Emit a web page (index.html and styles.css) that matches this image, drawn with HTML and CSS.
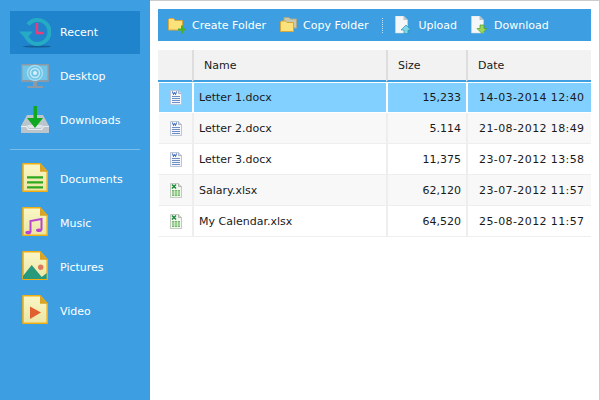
FILE: index.html
```html
<!DOCTYPE html>
<html>
<head>
<meta charset="utf-8">
<title>Files</title>
<link rel="stylesheet" href="styles.css">
</head>
<body>
	<svg class="defs" width="0" height="0">
		<symbol id="word" viewBox="0 0 12 15">
			<path d="M.5.5h8l3 3v11h-11z" fill="#f4f6fa" stroke="#bcc6d6"/>
			<path d="M8.500.5v3h3" fill="#d5dbe5" stroke="#aab4c4"/>
			<path d="M2.500 1.500l1 3 1-2 1 2 1-3" fill="none" stroke="#2a5ab0"/>
			<path d="M2 6.500h8M2 8.500h8M2 10.500h8M2 12.500h8" stroke="#6d8fc8"/>
		</symbol>
		<symbol id="excel" viewBox="0 0 12 15">
			<path d="M.5.5h8l3 3v11h-11z" fill="#f4f6f2" stroke="#c3cbc0"/>
			<path d="M8.500.5v3h3" fill="#d8dcd4" stroke="#b0b8ac"/>
			<path d="M2 1.500l4 4M6 1.500l-4 4" stroke="#1a8a3a" stroke-width="1.500"/>
			<path d="M2 7h8v6h-8z" fill="#74b968"/>
			<path d="M2 9h8M2 11h8M4.500 7v6M7.500 7v6" stroke="#e6f3e2" stroke-width=".7"/>
		</symbol>
		<linearGradient id="paper" x1="0" y1="0" x2="0" y2="1">
			<stop offset="0" stop-color="#faf7c6"/>
			<stop offset="1" stop-color="#ebe6a6"/>
		</linearGradient>
		<symbol id="page" viewBox="0 0 32 33">
			<path d="M4 .8h17l7.200 8v19.400h-24.200z" fill="url(#paper)" stroke="#f2ae10" stroke-width="1.600" stroke-linejoin="round"/>
			<path d="M21 .8l7.200 8h-7.200z" fill="#d9a328"/>
		</symbol>
	</svg>
	<div class="window">
		<div class="sidebar">
			<a class="nav-item active">
				<svg class="nav-icon" viewBox="0 0 32 33">
					<ellipse cx="18" cy="30.500" rx="14" ry="1" fill="#155e94"/>
					<path d="M9 8.500a12 12 0 1 1-2.500 8.500" fill="none" stroke="#26abc4" stroke-width="4"/>
					<path d="M0 15.500h14l-7 7.500z" fill="#26abc4"/>
					<path d="M18 7v10h6.500" fill="none" stroke="#e83e7c" stroke-width="2.400"/>
				</svg>
				<span>Recent</span>
			</a>
			<a class="nav-item">
				<svg class="nav-icon" viewBox="0 0 32 33">
					<rect x="2" y="4" width="28" height="18" rx="1" fill="#8d9aa6"/>
					<rect x="3.500" y="5.500" width="25" height="14.500" fill="#6fc4e8"/>
					<circle cx="16" cy="13" r="7.500" fill="none" stroke="#a4dcf2" stroke-width="1.500"/>
					<circle cx="16" cy="13" r="4.500" fill="none" stroke="#c4e9f7" stroke-width="1.500"/>
					<circle cx="16" cy="13" r="2" fill="#d8f1fa"/>
					<path d="M14 22h4v4h6v2h-16v-2h6z" fill="#8d9aa6"/>
				</svg>
				<span>Desktop</span>
			</a>
			<a class="nav-item">
				<svg class="nav-icon" viewBox="0 0 32 33">
					<path d="M8 11h16l6 11v6.500q0 .5-1 .5h-26q-1 0-1-.5v-6.500z" fill="#bcc5cc"/>
					<path d="M8 21h16l-2 3h-12z" fill="#dfe4e8"/>
					<path d="M2 22h6l2 3h12l2-3h6v1h-5l-2 3h-14l-2-3h-5z" fill="#e8ecef"/>
					<path d="M14.500 2h3.500v12h6l-8 10-8-10h6.500z" fill="#11a821"/>
				</svg>
				<span>Downloads</span>
			</a>
			<div class="nav-sep"></div>
			<a class="nav-item">
				<svg class="nav-icon" viewBox="0 0 32 33">
					<use href="#page"/>
					<path d="M8 14.300h16M8 19.300h16M8 24.300h16" stroke="#2fa81f" stroke-width="2.300"/>
				</svg>
				<span>Documents</span>
			</a>
			<a class="nav-item">
				<svg class="nav-icon" viewBox="0 0 32 33">
					<use href="#page"/>
					<path d="M11.500 25v-11l11-2v11" fill="none" stroke="#b844d0" stroke-width="2"/>
					<ellipse cx="9.300" cy="25.500" rx="3" ry="1.800" fill="#b844d0"/>
					<ellipse cx="20" cy="23.300" rx="3" ry="1.800" fill="#b844d0"/>
				</svg>
				<span>Music</span>
			</a>
			<a class="nav-item">
				<svg class="nav-icon" viewBox="0 0 32 33">
					<use href="#page"/>
					<circle cx="21.700" cy="16.300" r="2.700" fill="#dc7a5c"/>
					<path d="M4 25l8.700-11 10 12 5-4v6h-23.700z" fill="#279a7c"/>
				</svg>
				<span>Pictures</span>
			</a>
			<a class="nav-item">
				<svg class="nav-icon" viewBox="0 0 32 33">
					<use href="#page"/>
					<path d="M11 11.500l11 6-11 6.500z" fill="#e0602f"/>
				</svg>
				<span>Video</span>
			</a>
		</div>
		<div class="main">
			<div class="toolbar">
				<a class="tool">
					<svg class="tool-icon" viewBox="0 0 18 18">
						<path d="M.5 3.500l1-1h4l1.500 2h7.500v9.500h-14z" fill="#fbe27a" stroke="#d9a63c"/>
						<path d="M14 9.500v8M10 13.500h8" stroke="#4caf2a" stroke-width="2"/>
					</svg>
					<span>Create Folder</span>
				</a>
				<a class="tool">
					<svg class="tool-icon narrow" viewBox="0 0 17 18">
						<path d="M4 1.500h5l1.500 1.500h6v9h-12.500z" fill="#c8c9ae" stroke="#a8a88c"/>
						<path d="M.5 6l1-1h4l1.500 1.500h6.500v9h-13z" fill="#fbe27a" stroke="#d9a63c"/>
					</svg>
					<span>Copy Folder</span>
				</a>
				<div class="tool-sep"></div>
				<a class="tool">
					<svg class="tool-icon small" viewBox="0 0 16 18">
						<path d="M.5 0h8l4 4v13h-12z" fill="#f4f6f8" stroke="#d5dade" stroke-width=".5"/>
						<path d="M8.500 0l4 4h-4z" fill="#b9c2c9"/>
						<path d="M11 9l5 5h-3v3.500h-4v-3.500h-3z" fill="#7fd4e8" stroke="#2b97b3" stroke-width=".7"/>
					</svg>
					<span>Upload</span>
				</a>
				<a class="tool">
					<svg class="tool-icon small" viewBox="0 0 16 18">
						<path d="M.5 0h8l4 4v13h-12z" fill="#f4f6f8" stroke="#d5dade" stroke-width=".5"/>
						<path d="M8.500 0l4 4h-4z" fill="#b9c2c9"/>
						<path d="M9 9h4v3.500h3l-5 5-5-5h3z" fill="#9ad65a" stroke="#4d9c22" stroke-width=".7"/>
					</svg>
					<span>Download</span>
				</a>
			</div>
			<table class="files">
				<thead>
					<tr>
						<th class="col-icon"></th>
						<th class="col-name">Name</th>
						<th class="col-size">Size</th>
						<th class="col-date">Date</th>
					</tr>
				</thead>
				<tbody>
					<tr class="selected">
						<td class="cell-icon"><svg class="file-icon"><use href="#word"/></svg></td>
						<td>Letter 1.docx</td>
						<td class="cell-size">15,233</td>
						<td class="cell-date">14-03-2014 12:40</td>
					</tr>
					<tr>
						<td class="cell-icon"><svg class="file-icon"><use href="#word"/></svg></td>
						<td>Letter 2.docx</td>
						<td class="cell-size">5.114</td>
						<td class="cell-date">21-08-2012 18:49</td>
					</tr>
					<tr>
						<td class="cell-icon"><svg class="file-icon"><use href="#word"/></svg></td>
						<td>Letter 3.docx</td>
						<td class="cell-size">11,375</td>
						<td class="cell-date">23-07-2012 13:58</td>
					</tr>
					<tr>
						<td class="cell-icon"><svg class="file-icon"><use href="#excel"/></svg></td>
						<td>Salary.xlsx</td>
						<td class="cell-size">62,120</td>
						<td class="cell-date">23-07-2012 11:57</td>
					</tr>
					<tr>
						<td class="cell-icon"><svg class="file-icon"><use href="#excel"/></svg></td>
						<td>My Calendar.xlsx</td>
						<td class="cell-size">64,520</td>
						<td class="cell-date">25-08-2012 11:57</td>
					</tr>
				</tbody>
			</table>
		</div>
	</div>
</body>
</html>
```

FILE: styles.css
```css
* {
	box-sizing: border-box;
}

body {
	margin: 0;
	font-family: "DejaVu Sans", sans-serif;
	font-size: 11px;
	color: #1a1a1a;
}

.defs {
	position: absolute;
}

.window {
	display: flex;
	width: 600px;
	height: 400px;
	overflow: hidden;
}

.sidebar {
	width: 150px;
	padding: 11px 10px 0;
	background: #3d9fe2;
	flex-shrink: 0;
}

.nav-item {
	display: flex;
	align-items: center;
	height: 43px;
	margin-bottom: 1px;
	padding-left: 9px;
	color: #fff;
}

.nav-item.active {
	background: #1f84cc;
}

.nav-icon {
	width: 32px;
	height: 33px;
	margin-right: 9px;
}

.nav-sep {
	height: 1px;
	margin: 7px 0 8px;
	background: #79bdea;
}

.main {
	flex: 1;
	padding: 8px 8px 0;
	border-top: 1px solid #ccc;
	border-right: 1px solid #ccc;
}

.toolbar {
	display: flex;
	align-items: center;
	height: 32px;
	padding-left: 10px;
	background: #3d9fe2;
	color: #fff;
}

.tool {
	display: flex;
	align-items: center;
	margin-right: 14px;
}

.tool-icon {
	width: 18px;
	height: 18px;
	margin-right: 6px;
}

.tool-icon.narrow {
	width: 17px;
}

.tool-icon.small {
	width: 16px;
	margin-right: 7px;
}

.tool-sep {
	height: 15px;
	margin-right: 12px;
	border-left: 1px dotted #bfe0f6;
}

.files {
	width: 433px;
	margin-top: 9px;
	border-collapse: separate;
	border-spacing: 0;
	table-layout: fixed;
}

.files th {
	height: 32px;
	padding: 0 0 0 10px;
	background: #f2f2f2;
	border-left: 2px solid #ddd;
	border-bottom: 2px solid #3d9fe2;
	font-weight: normal;
	text-align: left;
}

.files th:first-child {
	border-left: 0;
}

.col-icon {
	width: 34px;
}

.col-size {
	width: 80px;
}

.col-date {
	width: 125px;
}

.files td {
	height: 31px;
	padding: 0 0 0 5px;
	border-left: 2px solid #eee;
	border-bottom: 1px solid #eee;
}

.files td:first-child {
	border-left: 1px solid #fff;
}

.files tbody tr:nth-child(even) {
	background: #f8f8f8;
}

.files tr.selected {
	background: #82d0ff;
}

.files tr.selected td {
	border-top: 1px solid #fff;
	border-left-color: #fff;
	border-bottom-color: #fff;
}

.files td.cell-icon {
	padding: 0;
	text-align: center;
}

.files td.cell-size {
	padding: 0 5px 0 0;
	text-align: right;
}

.files td.cell-date {
	padding-left: 11px;
	letter-spacing: .4px;
}

.file-icon {
	display: block;
	width: 12px;
	height: 15px;
	margin: 0 auto;
}
```
